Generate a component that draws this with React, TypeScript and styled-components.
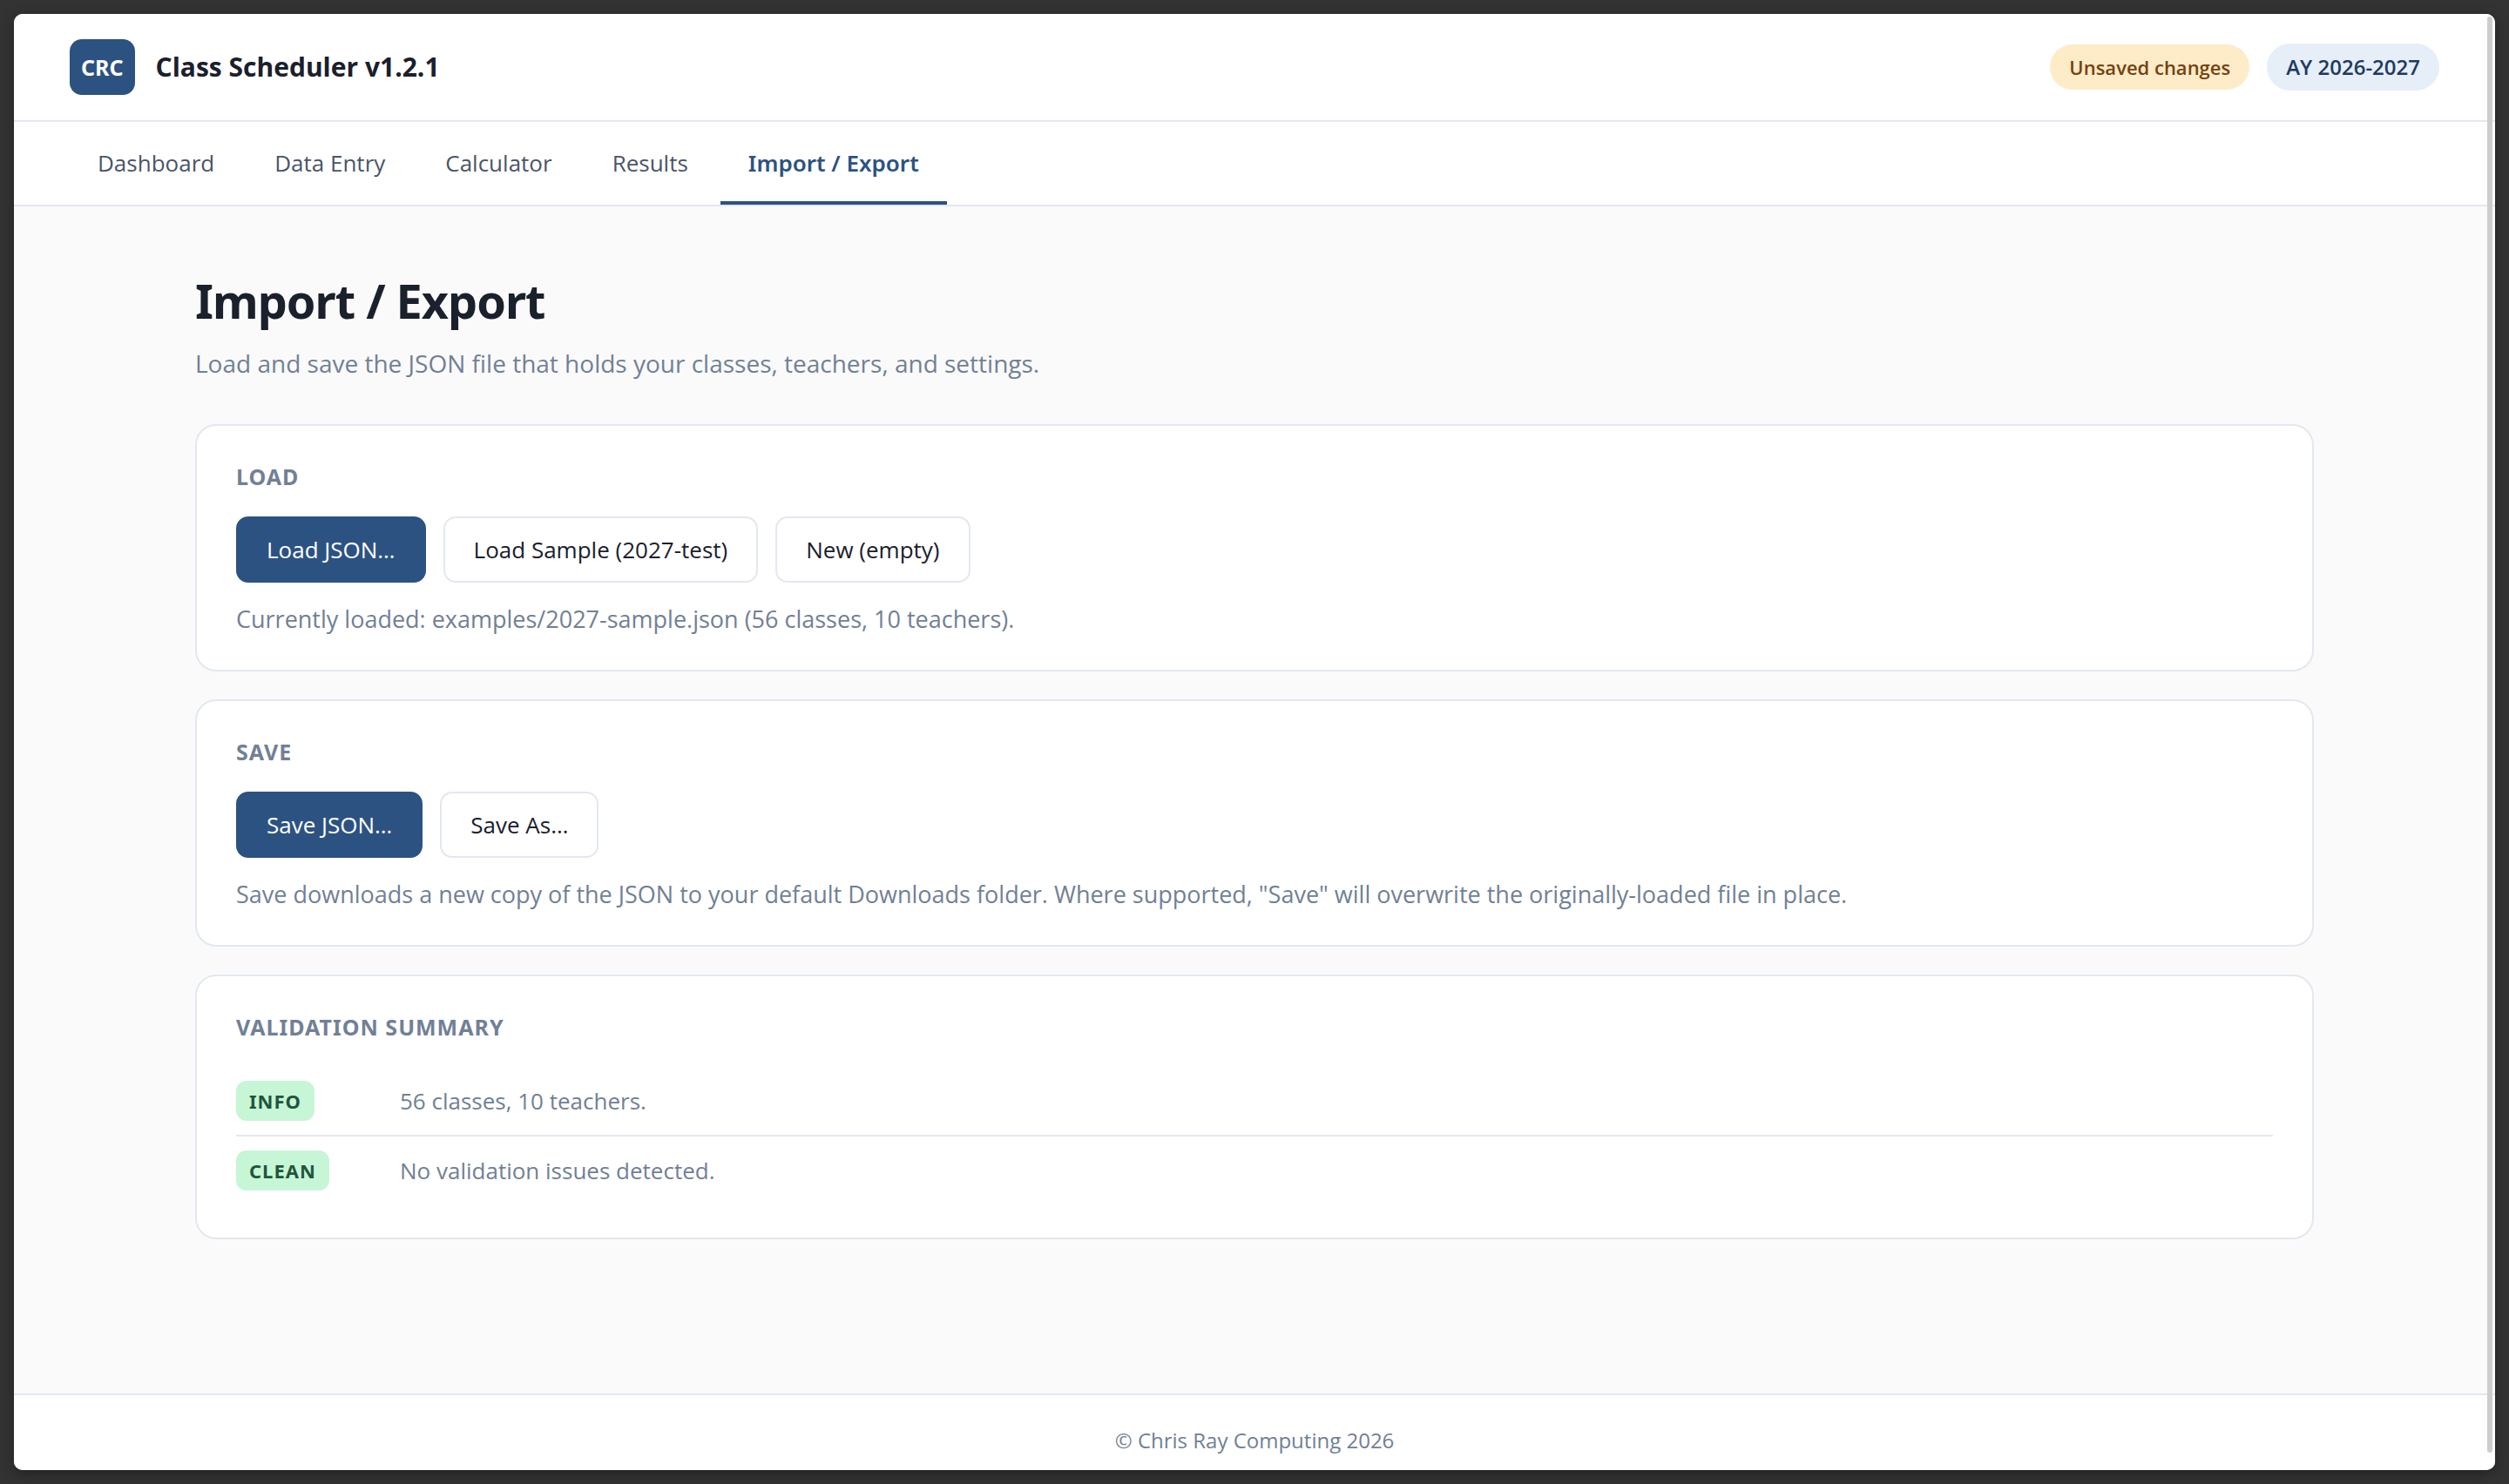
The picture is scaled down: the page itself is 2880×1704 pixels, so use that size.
import React from "react";
import styled, { createGlobalStyle, css } from "styled-components";

const color = {
  desk: "#333333",
  page: "#fafafa",
  surface: "#ffffff",
  line: "#e2e8f0",
  ink: "#1a202c",
  body: "#4a5568",
  muted: "#718096",
  brand: "#2c5282",
};

const font = {
  text: `"Open Sans", "Noto Sans", sans-serif`,
  strong: `"Noto Sans", "Open Sans", sans-serif`,
};

const GlobalStyle = createGlobalStyle`
  * { box-sizing: border-box; }
  body {
    margin: 0;
    background: ${color.desk};
    color: ${color.ink};
    font-family: ${font.text};
    font-size: 26px;
    line-height: 40px;
  }
  h1, h2, p, ul { margin: 0; padding: 0; }
  button { font: inherit; }
`;

const Desk = styled.div`
  height: 100vh;
  padding: 16px;
`;

const Window = styled.div`
  position: relative;
  display: flex;
  flex-direction: column;
  height: 100%;
  overflow: hidden;
  border-radius: 10px;
  background: ${color.page};
  box-shadow: 0 4px 16px rgba(0, 0, 0, 0.35);
`;

const ScrollThumb = styled.div`
  position: absolute;
  top: 3px;
  right: 3px;
  bottom: 20px;
  width: 6px;
  border-radius: 3px;
  background: #cdcdcd;
`;

const Header = styled.header`
  display: flex;
  align-items: center;
  justify-content: space-between;
  min-height: 124px;
  padding: 0 64px;
  border-bottom: 2px solid ${color.line};
  background: ${color.surface};
`;

const Brand = styled.div`
  display: flex;
  align-items: center;
  gap: 24px;
`;

const Logo = styled.span`
  padding: 12px 13px;
  border-radius: 14px;
  background: ${color.brand};
  color: #ffffff;
  font-family: ${font.strong};
  font-size: 25px;
  font-weight: 700;
`;

const AppName = styled.span`
  font-size: 30px;
  font-weight: 700;
`;

const Status = styled.div`
  display: flex;
  align-items: center;
  gap: 20px;
`;

const Pill = styled.span<{ $tone: "warn" | "term" }>`
  border-radius: 28px;
  font-weight: 600;
  line-height: 32px;
  ${({ $tone }) =>
    $tone === "warn"
      ? css`
          padding: 10px 22px;
          background: #feebc8;
          color: #744210;
          font-size: 22px;
        `
      : css`
          padding: 11px 22px;
          background: #e6eef8;
          color: #1e3a5f;
          font-size: 24px;
        `}
`;

const Nav = styled.nav`
  display: flex;
  gap: 5px;
  padding: 0 64px;
  border-bottom: 2px solid ${color.line};
  background: ${color.surface};
`;

const Tab = styled.a<{ $active?: boolean }>`
  padding: 27px 32px 24px;
  border-bottom: 4px solid ${({ $active }) => ($active ? color.brand : "transparent")};
  color: ${({ $active }) => ($active ? color.brand : color.body)};
  font-family: ${({ $active }) => ($active ? font.strong : font.text)};
  font-weight: ${({ $active }) => ($active ? 600 : 400)};
  text-decoration: none;
`;

const Main = styled.main`
  flex: 1;
  width: 100%;
  max-width: 2560px;
  margin: 0 auto;
  padding: 68px 64px;
`;

const Title = styled.h1`
  font-family: ${font.strong};
  font-size: 54px;
  font-weight: 700;
  line-height: 80px;
  letter-spacing: -1px;
`;

const Lead = styled.p`
  margin: 12px 0 50px;
  color: ${color.muted};
  font-size: 28px;
`;

const Card = styled.section`
  padding: 38px 45px;
  border: 2px solid ${color.line};
  border-radius: 24px;
  background: ${color.surface};
  & + & {
    margin-top: 32px;
  }
`;

const CardTitle = styled.h2`
  margin-bottom: 26px;
  color: ${color.muted};
  font-family: ${font.strong};
  font-size: 25px;
  font-weight: 700;
  letter-spacing: 1px;
  line-height: 40px;
  text-transform: uppercase;
`;

const Actions = styled.div`
  display: flex;
  flex-wrap: wrap;
  gap: 20px;
`;

const Button = styled.button<{ $primary?: boolean }>`
  padding: 16px 33px;
  border: 2px solid ${({ $primary }) => ($primary ? color.brand : color.line)};
  border-radius: 14px;
  background: ${({ $primary }) => ($primary ? color.brand : color.surface)};
  color: ${({ $primary }) => ($primary ? "#ffffff" : color.ink)};
  cursor: pointer;
`;

const Note = styled.p`
  margin-top: 22px;
  color: ${color.muted};
  font-size: 27px;
`;

const Findings = styled.ul`
  list-style: none;
`;

const Finding = styled.li`
  display: grid;
  grid-template-columns: 164px 1fr;
  gap: 24px;
  align-items: center;
  padding: 16px 0;
  color: ${color.muted};
  & + & {
    border-top: 2px solid ${color.line};
  }
`;

const Badge = styled.span`
  justify-self: start;
  padding: 7px 15px;
  border-radius: 12px;
  background: #c6f6d5;
  color: #22543d;
  font-family: ${font.strong};
  font-size: 22px;
  font-weight: 700;
  line-height: 32px;
  letter-spacing: 1px;
`;

const Footer = styled.footer`
  padding: 32px 64px 14px;
  border-top: 2px solid ${color.line};
  background: ${color.surface};
  color: ${color.muted};
  font-size: 24px;
  text-align: center;
`;

const tabs = ["Dashboard", "Data Entry", "Calculator", "Results", "Import / Export"];
const currentTab = "Import / Export";

const findings = [
  { level: "INFO", text: "56 classes, 10 teachers." },
  { level: "CLEAN", text: "No validation issues detected." },
];

export default function App() {
  return (
    <Desk>
      <GlobalStyle />
      <Window>
        <Header>
          <Brand>
            <Logo>CRC</Logo>
            <AppName>Class Scheduler v1.2.1</AppName>
          </Brand>
          <Status>
            <Pill $tone="warn">Unsaved changes</Pill>
            <Pill $tone="term">AY 2026-2027</Pill>
          </Status>
        </Header>
        <Nav>
          {tabs.map((name) => (
            <Tab
              key={name}
              href="#"
              $active={name === currentTab}
              aria-current={name === currentTab ? "page" : undefined}
            >
              {name}
            </Tab>
          ))}
        </Nav>
        <Main>
          <Title>Import / Export</Title>
          <Lead>Load and save the JSON file that holds your classes, teachers, and settings.</Lead>
          <Card>
            <CardTitle>Load</CardTitle>
            <Actions>
              <Button $primary>Load JSON…</Button>
              <Button>Load Sample (2027-test)</Button>
              <Button>New (empty)</Button>
            </Actions>
            <Note>Currently loaded: examples/2027-sample.json (56 classes, 10 teachers).</Note>
          </Card>
          <Card>
            <CardTitle>Save</CardTitle>
            <Actions>
              <Button $primary>Save JSON…</Button>
              <Button>Save As…</Button>
            </Actions>
            <Note>
              Save downloads a new copy of the JSON to your default Downloads folder. Where supported,
              "Save" will overwrite the originally-loaded file in place.
            </Note>
          </Card>
          <Card>
            <CardTitle>Validation Summary</CardTitle>
            <Findings>
              {findings.map((f) => (
                <Finding key={f.level}>
                  <Badge>{f.level}</Badge>
                  <span>{f.text}</span>
                </Finding>
              ))}
            </Findings>
          </Card>
        </Main>
        <Footer>© Chris Ray Computing 2026</Footer>
        <ScrollThumb />
      </Window>
    </Desk>
  );
}
